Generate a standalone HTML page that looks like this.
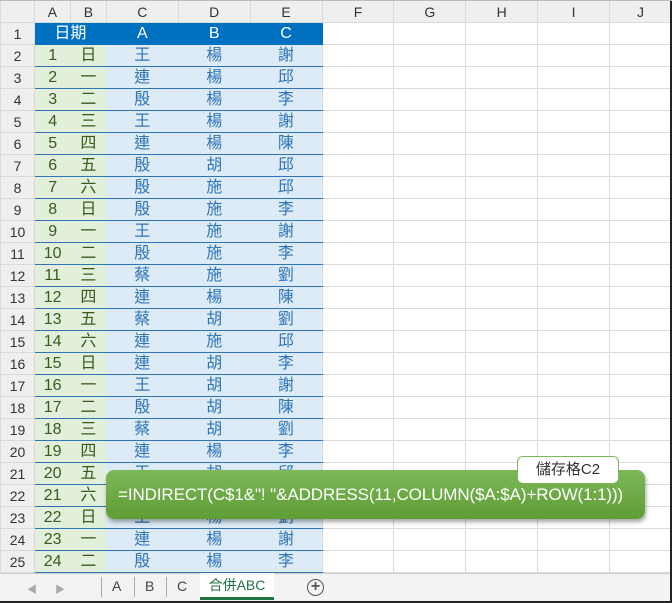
<!DOCTYPE html>
<html><head><meta charset="utf-8"><style>
*{margin:0;padding:0;box-sizing:border-box}
body{width:672px;height:603px;overflow:hidden;background:#fff;font-family:"Liberation Sans","Noto Sans CJK TC",sans-serif;position:relative}
table{border-collapse:collapse;table-layout:fixed;position:absolute;left:0;top:0}
td{height:22px;border:1px solid #dadada;text-align:center;font-size:16px;padding:0;line-height:20px;overflow:hidden;white-space:nowrap}
tr.h td{background:#efefef;color:#333;font-size:14px}
td.r{background:#efefef;color:#333;font-size:14px}
tr.t td.d{background:#0070C0;color:#fff;border-color:#0070C0}
td.g{background:#E2EFDA;color:#3a5a1c;border-top:none;border-left:none;border-right:none;border-bottom:1px solid #2E75B6}
td.b{background:#DDEBF7;color:#2E75B6;border-left:none;border-right:none;border-bottom:1px solid #2E75B6}
.bar{position:absolute;left:0;top:573px;width:672px;height:30px;background:#f3f3f3;border-top:1px solid #cfcfcf;font-size:14px;color:#444}
.bar span{position:absolute;top:4px}
.sep{position:absolute;top:3px;width:1px;height:20px;background:#aaa}
.box{position:absolute;left:106px;top:470px;width:539px;height:49px;border-radius:8px;background:linear-gradient(#7cb85a,#5f9d35);box-shadow:1px 3px 4px rgba(0,0,0,.35);color:#fff;font-size:17px;line-height:49px;padding-left:12px;letter-spacing:-0.1px}
.lab{position:absolute;left:517px;top:456px;width:102px;height:28px;background:#fff;border:1px solid #7cb85a;border-radius:6px;text-align:center;line-height:26px;font-size:15px;color:#333}
</style></head><body>
<table>
<colgroup><col style="width:34px"><col style="width:36px"><col style="width:36px"><col style="width:72px"><col style="width:72px"><col style="width:72px"><col style="width:72px"><col style="width:72px"><col style="width:72px"><col style="width:72px"><col style="width:62px"></colgroup>
<tr class="h"><td style="background:#efefef"></td><td>A</td><td>B</td><td>C</td><td>D</td><td>E</td><td>F</td><td>G</td><td>H</td><td>I</td><td>J</td></tr>
<tr class="t"><td class="r">1</td><td class="d" colspan="2">日期</td><td class="d">A</td><td class="d">B</td><td class="d">C</td><td></td><td></td><td></td><td></td><td></td></tr>
<tr><td class="r">2</td><td class="g">1</td><td class="g">日</td><td class="b">王</td><td class="b">楊</td><td class="b">謝</td><td></td><td></td><td></td><td></td><td></td></tr>
<tr><td class="r">3</td><td class="g">2</td><td class="g">一</td><td class="b">連</td><td class="b">楊</td><td class="b">邱</td><td></td><td></td><td></td><td></td><td></td></tr>
<tr><td class="r">4</td><td class="g">3</td><td class="g">二</td><td class="b">殷</td><td class="b">楊</td><td class="b">李</td><td></td><td></td><td></td><td></td><td></td></tr>
<tr><td class="r">5</td><td class="g">4</td><td class="g">三</td><td class="b">王</td><td class="b">楊</td><td class="b">謝</td><td></td><td></td><td></td><td></td><td></td></tr>
<tr><td class="r">6</td><td class="g">5</td><td class="g">四</td><td class="b">連</td><td class="b">楊</td><td class="b">陳</td><td></td><td></td><td></td><td></td><td></td></tr>
<tr><td class="r">7</td><td class="g">6</td><td class="g">五</td><td class="b">殷</td><td class="b">胡</td><td class="b">邱</td><td></td><td></td><td></td><td></td><td></td></tr>
<tr><td class="r">8</td><td class="g">7</td><td class="g">六</td><td class="b">殷</td><td class="b">施</td><td class="b">邱</td><td></td><td></td><td></td><td></td><td></td></tr>
<tr><td class="r">9</td><td class="g">8</td><td class="g">日</td><td class="b">殷</td><td class="b">施</td><td class="b">李</td><td></td><td></td><td></td><td></td><td></td></tr>
<tr><td class="r">10</td><td class="g">9</td><td class="g">一</td><td class="b">王</td><td class="b">施</td><td class="b">謝</td><td></td><td></td><td></td><td></td><td></td></tr>
<tr><td class="r">11</td><td class="g">10</td><td class="g">二</td><td class="b">殷</td><td class="b">施</td><td class="b">李</td><td></td><td></td><td></td><td></td><td></td></tr>
<tr><td class="r">12</td><td class="g">11</td><td class="g">三</td><td class="b">蔡</td><td class="b">施</td><td class="b">劉</td><td></td><td></td><td></td><td></td><td></td></tr>
<tr><td class="r">13</td><td class="g">12</td><td class="g">四</td><td class="b">連</td><td class="b">楊</td><td class="b">陳</td><td></td><td></td><td></td><td></td><td></td></tr>
<tr><td class="r">14</td><td class="g">13</td><td class="g">五</td><td class="b">蔡</td><td class="b">胡</td><td class="b">劉</td><td></td><td></td><td></td><td></td><td></td></tr>
<tr><td class="r">15</td><td class="g">14</td><td class="g">六</td><td class="b">連</td><td class="b">施</td><td class="b">邱</td><td></td><td></td><td></td><td></td><td></td></tr>
<tr><td class="r">16</td><td class="g">15</td><td class="g">日</td><td class="b">連</td><td class="b">胡</td><td class="b">李</td><td></td><td></td><td></td><td></td><td></td></tr>
<tr><td class="r">17</td><td class="g">16</td><td class="g">一</td><td class="b">王</td><td class="b">胡</td><td class="b">謝</td><td></td><td></td><td></td><td></td><td></td></tr>
<tr><td class="r">18</td><td class="g">17</td><td class="g">二</td><td class="b">殷</td><td class="b">胡</td><td class="b">陳</td><td></td><td></td><td></td><td></td><td></td></tr>
<tr><td class="r">19</td><td class="g">18</td><td class="g">三</td><td class="b">蔡</td><td class="b">胡</td><td class="b">劉</td><td></td><td></td><td></td><td></td><td></td></tr>
<tr><td class="r">20</td><td class="g">19</td><td class="g">四</td><td class="b">連</td><td class="b">楊</td><td class="b">李</td><td></td><td></td><td></td><td></td><td></td></tr>
<tr><td class="r">21</td><td class="g">20</td><td class="g">五</td><td class="b">王</td><td class="b">胡</td><td class="b">邱</td><td></td><td></td><td></td><td></td><td></td></tr>
<tr><td class="r">22</td><td class="g">21</td><td class="g">六</td><td class="b">殷</td><td class="b">胡</td><td class="b">陳</td><td></td><td></td><td></td><td></td><td></td></tr>
<tr><td class="r">23</td><td class="g">22</td><td class="g">日</td><td class="b">王</td><td class="b">楊</td><td class="b">劉</td><td></td><td></td><td></td><td></td><td></td></tr>
<tr><td class="r">24</td><td class="g">23</td><td class="g">一</td><td class="b">連</td><td class="b">楊</td><td class="b">謝</td><td></td><td></td><td></td><td></td><td></td></tr>
<tr><td class="r">25</td><td class="g">24</td><td class="g">二</td><td class="b">殷</td><td class="b">楊</td><td class="b">李</td><td></td><td></td><td></td><td></td><td></td></tr>
<tr><td class="r">26</td><td></td><td></td><td></td><td></td><td></td><td></td><td></td><td></td><td></td><td></td></tr>
</table>
<div class="bar">
<span style="left:27px;color:#aaa;font-size:10px;top:7px">◀</span>
<span style="left:55px;color:#aaa;font-size:10px;top:7px">▶</span>
<div class="sep" style="left:101px"></div>
<span style="left:112px">A</span>
<div class="sep" style="left:134px"></div>
<span style="left:145px">B</span>
<div class="sep" style="left:166px"></div>
<span style="left:177px">C</span>
<div style="position:absolute;left:200px;top:-1px;width:74px;height:27px;background:#fff;border-bottom:3px solid #217346;color:#217346;text-align:center;line-height:24px">合併ABC</div>
<div style="position:absolute;left:307px;top:5px;width:17px;height:17px;border:1.5px solid #555;border-radius:50%;text-align:center;line-height:13px;font-size:16px;font-weight:bold;color:#555">+</div>
</div>
<div class="box">=INDIRECT(C$1&amp;"! "&amp;ADDRESS(11,COLUMN($A:$A)+ROW(1:1)))</div>
<div class="lab">儲存格C2</div>
<div style="position:absolute;right:0;top:0;width:2px;height:603px;background:#222"></div>
<div style="position:absolute;left:0;bottom:0;width:672px;height:2px;background:#222"></div>
<div style="position:absolute;left:0;top:0;width:672px;height:1px;background:#bbb"></div>
</body></html>
